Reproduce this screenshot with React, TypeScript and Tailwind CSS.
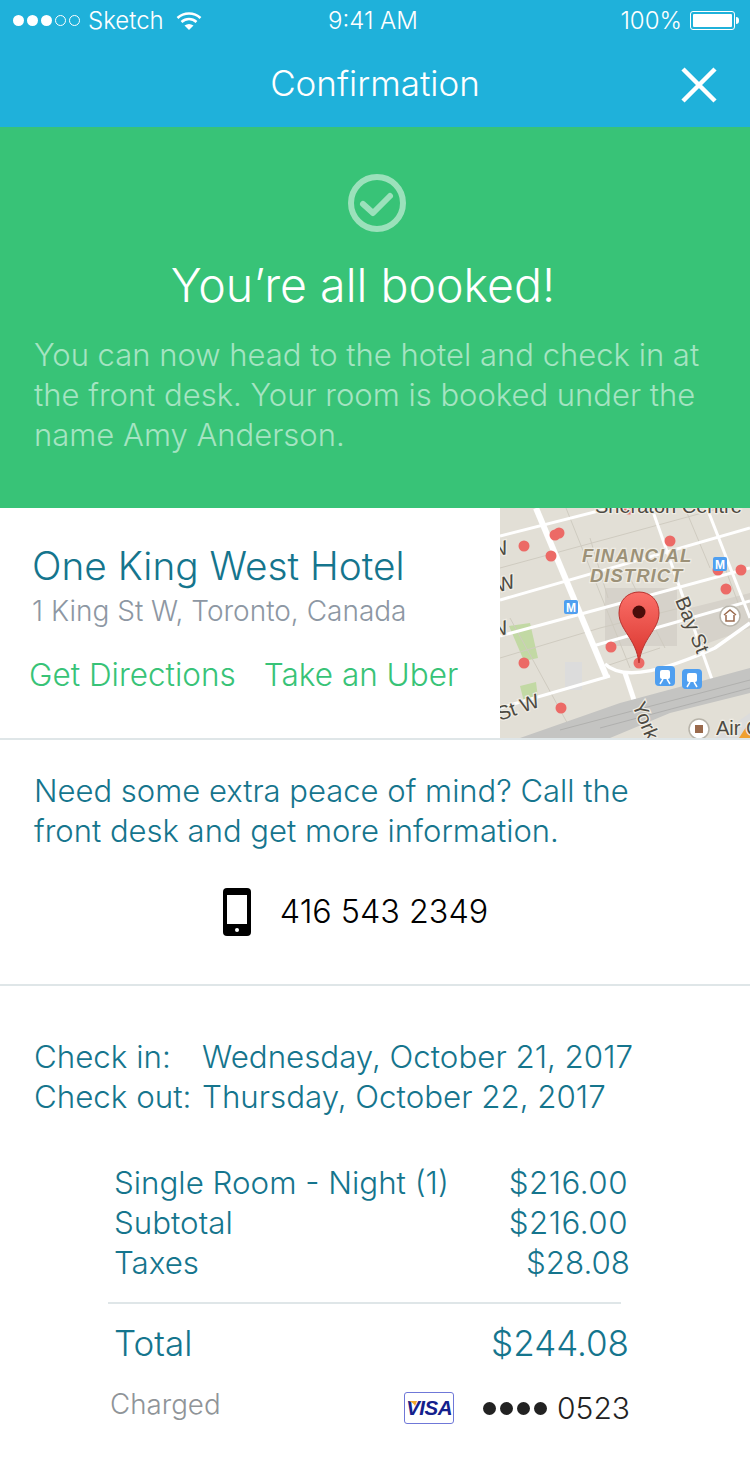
import React from "react";

const mapMinorRoads = [
  "M66 0 L110 110 L130 160",
  "M0 60 L250 -8",
  "M90 30 L108 90",
  "M100 160 L160 140",
  "M10 110 L70 220",
  "M185 0 L210 60",
  "M0 150 L100 120 L180 100",
  "M130 70 L165 140",
  "M225 60 L240 100",
];

const mapRoads = [
  "M0 28 L130 -5",
  "M0 92 L250 20",
  "M0 128 L250 60",
  "M93 138 L250 93",
  "M0 200 L110 168",
  "M150 -5 L215 180",
  "M205 -5 L250 110",
];

const mapDots = [
  [24, 38],
  [51, 48],
  [55, 27],
  [59, 25],
  [129, 1],
  [170, 33],
  [218, 62],
  [241, 62],
  [226, 81],
  [111, 139],
  [24, 155],
  [61, 200],
  [139, 155],
];

function StatusBar() {
  return (
    <div className="relative flex h-[41px] items-center justify-between pl-[13px] pr-[11px] text-[24px] leading-none font-light text-white">
      <div className="flex items-center">
        <div className="flex items-center gap-[3px]">
          <span className="h-[11px] w-[11px] rounded-full bg-white" />
          <span className="h-[11px] w-[11px] rounded-full bg-white" />
          <span className="h-[11px] w-[11px] rounded-full bg-white" />
          <span className="h-[11px] w-[11px] rounded-full border border-white" />
          <span className="h-[11px] w-[11px] rounded-full border border-white" />
        </div>
        <span className="ml-[8px]">Sketch</span>
        <svg viewBox="0 0 26 20" className="ml-[12px] h-[20px] w-[26px]" fill="none" stroke="white" strokeWidth="2.6">
          <path d="M1.500 7 C8 1 18 1 24.500 7" />
          <path d="M5.500 11 C10 7 16 7 20.500 11" />
          <path d="M8.500 14.500 L13 19 L17.500 14.500 C14.500 12.500 11.500 12.500 8.500 14.500Z" fill="white" stroke="none" />
        </svg>
      </div>
      <span className="absolute left-[328px]">9:41 AM</span>
      <div className="flex items-center">
        <span>100%</span>
        <div className="ml-[8px] flex h-[19px] w-[45px] items-center rounded-[3px] border border-white p-[2px]">
          <div className="h-full w-full rounded-[1px] bg-white" />
        </div>
        <div className="ml-[1px] h-[7px] w-[3px] rounded-r-sm bg-white" />
      </div>
    </div>
  );
}

function Header() {
  return (
    <div className="relative flex h-[86px] items-center justify-center pb-[2px]">
      <h1 className="text-[35px] leading-none font-light text-white">Confirmation</h1>
      <svg viewBox="0 0 36 36" className="absolute top-[26px] right-[33px] h-[36px] w-[36px]" stroke="white" strokeWidth="4.5">
        <path d="M2 2 L34 34 M34 2 L2 34" />
      </svg>
    </div>
  );
}

function Banner() {
  return (
    <section className="h-[381px] bg-[#38c377] pt-[47px]">
      <svg viewBox="0 0 58 58" className="ml-[348px] h-[58px] w-[58px]" fill="none" stroke="#9be1bb">
        <circle cx="29" cy="29" r="26" strokeWidth="6" />
        <path d="M15 30 L25 39 L42 22" strokeWidth="6" strokeLinecap="round" strokeLinejoin="round" />
      </svg>
      <h2 className="mt-[26px] pr-[24px] text-center text-[46.500px] leading-[54px] font-light text-white">You’re all booked!</h2>
      <p className="mt-[23px] pl-[34px] pr-[20px] text-[31px] leading-[40px] font-light text-[#a5e4c2]">
        You can now head to the hotel and check in at the front desk. Your room is booked under the name Amy Anderson.
      </p>
    </section>
  );
}

function MapThumb() {
  return (
    <svg viewBox="0 0 250 230" className="h-[230px] w-[250px] shrink-0" fontFamily="'Liberation Sans', sans-serif">
      <defs>
        <linearGradient id="pin" x1="0" y1="0" x2="0" y2="1">
          <stop offset="0" stopColor="#fb6f68" />
          <stop offset="1" stopColor="#d8332c" />
        </linearGradient>
      </defs>
      <rect width="250" height="230" fill="#e2dfd6" />
      <rect x="105" y="80" width="72" height="58" fill="#d6d2ca" />
      <path d="M190 100 L250 85 L250 120 L200 138Z" fill="#d6d2ca" />
      <path d="M9 118 L30 115 L38 150 L24 153Z" fill="#c2d9a4" />
      <path d="M20 178 L36 174 L38 190 L24 194Z" fill="#c2d9a4" />
      <rect x="65" y="154" width="17" height="28" fill="#dcdcdc" />
      {mapMinorRoads.map((d) => (
        <path key={d} d={d} stroke="#cfcbc0" strokeWidth="1" fill="none" />
      ))}
      {mapRoads.map((d) => (
        <path key={d} d={d} stroke="#ffffff" strokeWidth="3" fill="none" />
      ))}
      <path d="M36 0 L107 170" stroke="#ffffff" strokeWidth="6" fill="none" />
      <path d="M105 156 C125 175 170 160 215 140 L250 115" stroke="#ffffff" strokeWidth="3.500" fill="none" />
      <path d="M125 165 L135 195" stroke="#ffffff" strokeWidth="5" fill="none" />
      <path d="M20 230 L120 195 L250 160 L250 185 L170 205 L110 230Z" fill="#c4c4c2" />
      <path d="M60 222 L250 172 M100 220 L250 180" stroke="#b0b0ae" strokeWidth="1" />
      <path d="M215 230 L250 205 L250 230Z" fill="#dcdcdc" />
      <path d="M239 230 L250 213 L250 230Z" fill="#f0a030" />
      {mapDots.map(([cx, cy]) => (
        <circle key={`${cx}-${cy}`} cx={cx} cy={cy} r="5.500" fill="#ec6a66" />
      ))}
      <g stroke="#efece4" strokeWidth="2.500" paintOrder="stroke">
        <text x="82" y="54" fontSize="18.500" fontWeight="700" fontStyle="italic" fill="#9c9178" letterSpacing="1.200">FINANCIAL</text>
        <text x="90" y="74" fontSize="18.500" fontWeight="700" fontStyle="italic" fill="#9c9178" letterSpacing="1">DISTRICT</text>
        <text x="95" y="5" fontSize="20" fill="#4d4a42">Sheraton Centre</text>
        <text x="0" y="213" fontSize="20" fill="#4d4a42" transform="rotate(-20 0 213)">St W</text>
        <text x="-2" y="84" fontSize="20" fill="#4d4a42" transform="rotate(-16 0 84)">W</text>
        <text x="-9" y="48" fontSize="20" fill="#4d4a42" transform="rotate(-16 0 48)">W</text>
        <text x="-9" y="128" fontSize="20" fill="#4d4a42" transform="rotate(-16 0 128)">W</text>
        <text x="175" y="92" fontSize="20" fill="#4d4a42" transform="rotate(68 175 92)">Bay St</text>
        <text x="132" y="197" fontSize="20" fill="#4d4a42" transform="rotate(68 132 197)">York</text>
        <text x="216" y="227" fontSize="20" fill="#4d4a42">Air C</text>
      </g>
      <rect x="64" y="92" width="14" height="14" rx="2" fill="#4f9ff0" />
      <text x="66" y="104" fontSize="12" fontWeight="700" fill="#ffffff">M</text>
      <rect x="213" y="49" width="14" height="14" rx="2" fill="#4f9ff0" />
      <text x="215" y="61" fontSize="12" fontWeight="700" fill="#ffffff">M</text>
      <circle cx="230" cy="108" r="10" fill="#ffffff" stroke="#b8b4aa" strokeWidth="1.500" />
      <path d="M224 107 L230 102 L236 107 M226 107 V113 H234 V107" stroke="#9a6a4d" strokeWidth="1.500" fill="none" />
      <rect x="155" y="158" width="20" height="20" rx="4" fill="#4f9ff0" />
      <rect x="160" y="162" width="10" height="9" rx="2" fill="#ffffff" />
      <path d="M160 176 L163 171 M170 176 L167 171" stroke="#ffffff" strokeWidth="1.500" />
      <rect x="182" y="161" width="20" height="20" rx="4" fill="#4f9ff0" />
      <rect x="187" y="165" width="10" height="9" rx="2" fill="#ffffff" />
      <path d="M187 179 L190 174 M197 179 L194 174" stroke="#ffffff" strokeWidth="1.500" />
      <circle cx="199" cy="221" r="10" fill="#ffffff" stroke="#b8b4aa" strokeWidth="1.500" />
      <rect x="195" y="217" width="8" height="8" fill="#9a6a4d" />
      <path d="M139 155 C136 130 119 122 119 105 C119 92 128 84 139 84 C150 84 159 92 159 105 C159 122 142 130 139 155Z" fill="url(#pin)" stroke="#b8332f" strokeWidth="1" />
      <circle cx="139" cy="104" r="6.500" fill="#4a0d0a" />
    </svg>
  );
}

function HotelRow() {
  return (
    <section className="flex h-[232px] border-b-2 border-[#dfe6e8] bg-white">
      <div className="min-w-0 flex-1 pl-[32px] pt-[34px]">
        <h3 className="text-[38.800px] leading-[48px] font-light whitespace-nowrap text-[#15758d]">One King West Hotel</h3>
        <p className="mt-[6px] text-[28px] leading-[30px] font-light whitespace-nowrap text-[#8d97a3]">1 King St W, Toronto, Canada</p>
        <div className="mt-[31px] -ml-[3px] flex gap-[28px] text-[31.500px] leading-[36px] font-light whitespace-nowrap text-[#38c377]">
          <span>Get Directions</span>
          <span>Take an Uber</span>
        </div>
      </div>
      <MapThumb />
    </section>
  );
}

function CallRow() {
  return (
    <section className="h-[246px] border-b-2 border-[#dfe6e8] pl-[34px] pr-[60px] pt-[31px]">
      <p className="text-[31px] leading-[40px] font-light text-[#15758d]">
        Need some extra peace of mind? Call the front desk and get more information.
      </p>
      <div className="mt-[37px] flex items-center justify-center pr-[13px]">
        <svg viewBox="0 0 28 48" className="h-[48px] w-[28px]">
          <rect width="28" height="48" rx="4" fill="#000" />
          <rect x="4" y="7" width="20" height="29" fill="#fff" />
          <circle cx="14" cy="42" r="2" fill="#fff" />
        </svg>
        <span className="ml-[29px] text-[32.300px] leading-none font-light text-black">416 543 2349</span>
      </div>
    </section>
  );
}

function Trip() {
  return (
    <section className="pl-[34px] pt-[51px] text-[31.300px] leading-[40px] font-light text-[#15758d]">
      <div className="grid grid-cols-[168px_1fr]">
        <span>Check in:</span>
        <span>Wednesday, October 21, 2017</span>
        <span>Check out:</span>
        <span>Thursday, October 22, 2017</span>
      </div>
    </section>
  );
}

function Receipt() {
  return (
    <section className="mt-[46px] w-[630px] pl-[108px]">
      <div className="pl-[6px] text-[31.300px] leading-[40px] font-light text-[#15758d]">
        <div className="flex justify-between"><span>Single Room - Night (1)</span><span className="pr-[2px] tracking-[0.5px]">$216.00</span></div>
        <div className="flex justify-between"><span>Subtotal</span><span className="pr-[2px] tracking-[0.5px]">$216.00</span></div>
        <div className="flex justify-between"><span>Taxes</span><span>$28.08</span></div>
      </div>
      <div className="mt-[19px] h-[2px] w-[513px] bg-[#dfe6e8]" />
      <div className="mt-[17px] flex justify-between pl-[6px] pr-[1px] text-[35px] leading-[44px] font-light text-[#15758d]">
        <span>Total</span>
        <span>$244.08</span>
      </div>
      <div className="mt-[25px] flex items-center text-[27.700px] leading-[36px]">
        <span className="-mt-[8px] ml-[2px] font-light text-[#8f9498]">Charged</span>
        <div className="relative ml-auto flex h-[32px] w-[50px] items-center justify-center rounded-[3px] border border-[#6f78d8] bg-white">
          <svg viewBox="0 0 8 5" className="absolute top-[8px] left-[4px] h-[5px] w-[8px]">
            <path d="M0 0 H8 L6 5 C5 3 3 1 0 0Z" fill="#f0a62a" />
          </svg>
          <span className="font-['Liberation_Sans',sans-serif] text-[20.500px] leading-none font-bold tracking-[-0.5px] text-[#14208c] italic">VISA</span>
        </div>
        <div className="ml-[29px] flex gap-[4px]">
          <span className="h-[13px] w-[13px] rounded-full bg-[#222]" />
          <span className="h-[13px] w-[13px] rounded-full bg-[#222]" />
          <span className="h-[13px] w-[13px] rounded-full bg-[#222]" />
          <span className="h-[13px] w-[13px] rounded-full bg-[#222]" />
        </div>
        <span className="ml-[10px] text-[30px] font-light text-[#222]">0523</span>
      </div>
    </section>
  );
}

export default function App() {
  return (
    <div className="h-[1482px] w-[750px] overflow-hidden bg-white font-['Inter','Liberation_Sans',sans-serif]">
      <div className="bg-[#1fb1da]">
        <StatusBar />
        <Header />
      </div>
      <Banner />
      <HotelRow />
      <CallRow />
      <Trip />
      <Receipt />
    </div>
  );
}
